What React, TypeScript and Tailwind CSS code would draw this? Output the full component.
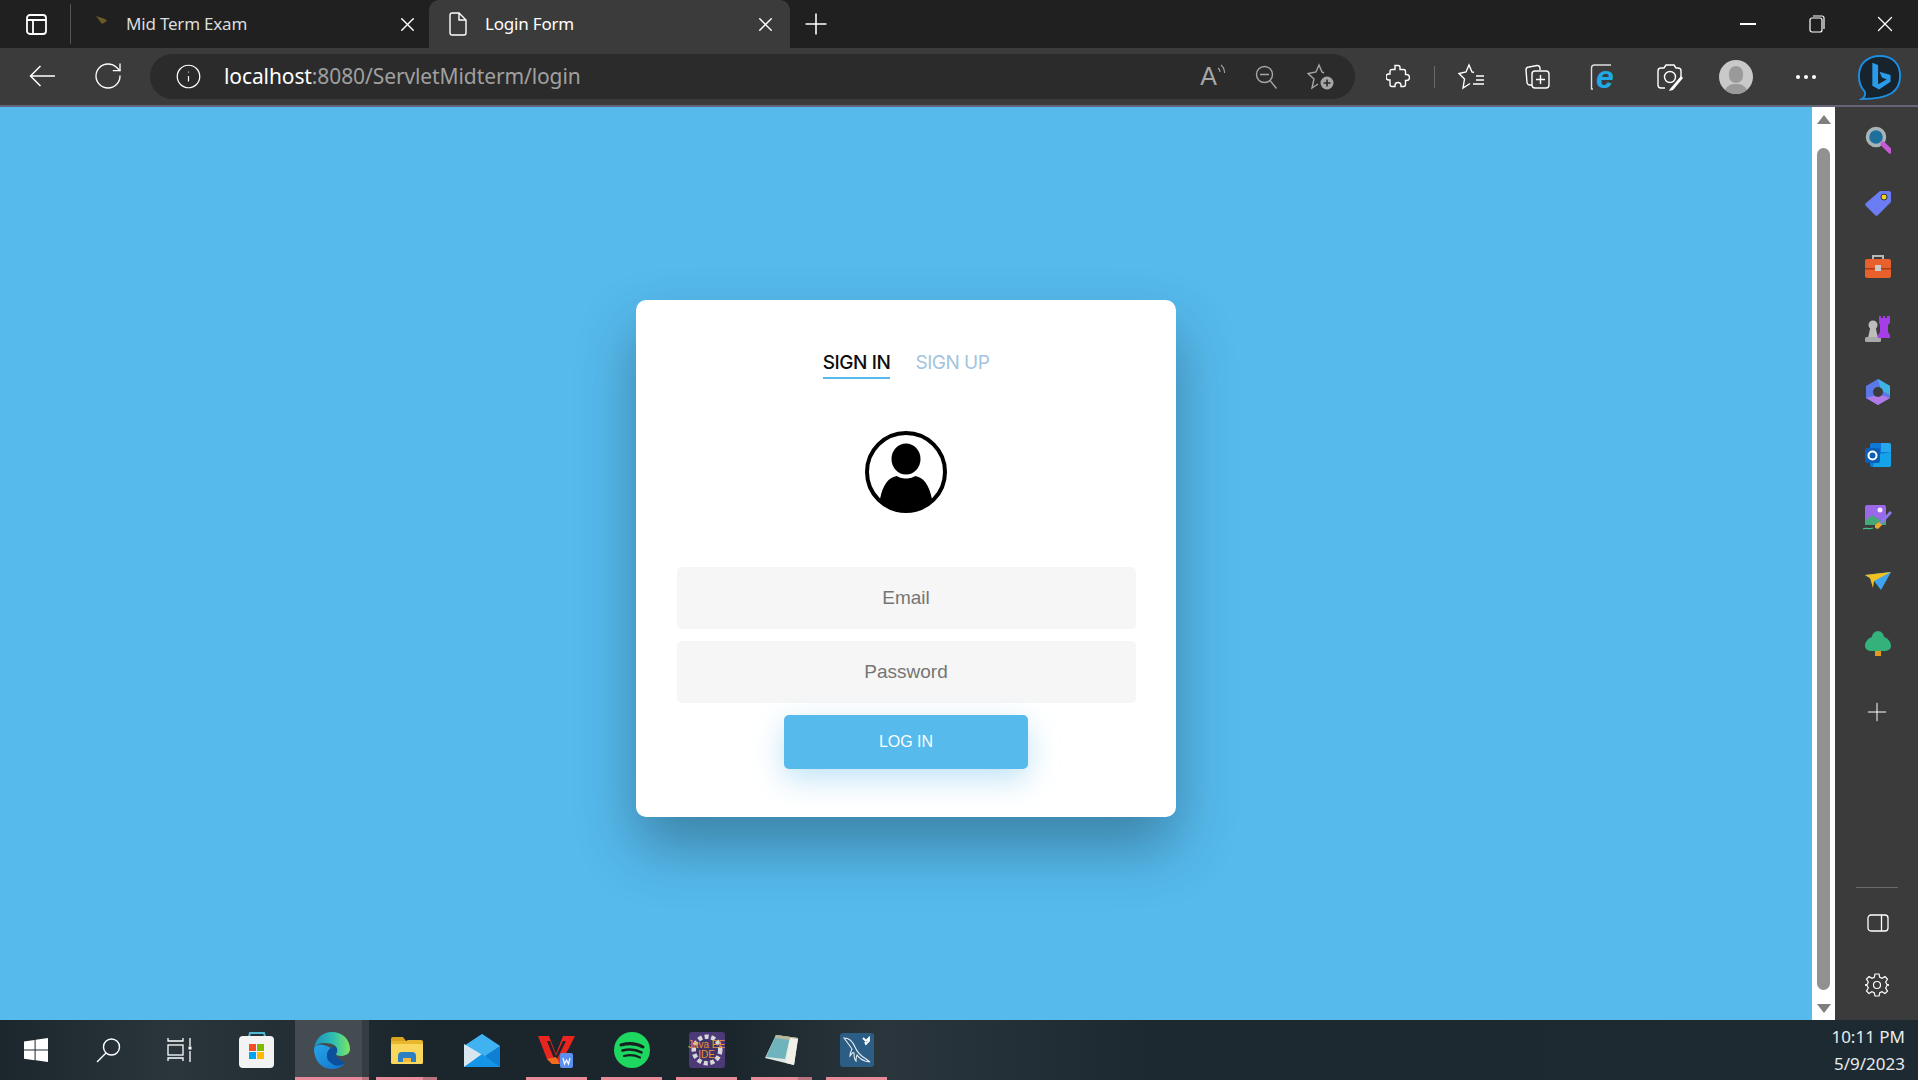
// App.tsx
import { Info, Plus, RotateCw, X } from "lucide-react";

const chromeFont = { fontFamily: '"Noto Sans", "Open Sans", sans-serif' };

function WindowsLogo() {
  return (
    <svg width="24" height="24" viewBox="0 0 24 24" fill="#fff">
      <path d="M0 3.4 10.6 2v9.600H0zM11.600 1.800 24 0v11.600H11.600zM0 12.600h10.600v9.600L0 20.700zM11.600 12.600H24V24l-12.400-1.700z" />
    </svg>
  );
}

function TaskbarSearch() {
  return (
    <svg width="25" height="25" viewBox="0 0 25 25" fill="none" stroke="#fff" strokeWidth="1.400">
      <circle cx="15.500" cy="9" r="8" />
      <path d="M10 15 1 24" />
    </svg>
  );
}

function TaskView() {
  return (
    <svg width="26" height="24" viewBox="0 0 26 24" fill="none" stroke="#fff" strokeWidth="1.300">
      <path d="M1 0v3h15V0M1 23v-3h15v3" />
      <rect x="1" y="7" width="15" height="10" />
      <path d="M23 0v8M23 13v11" />
      <rect x="21.500" y="8.500" width="3" height="3" fill="#fff" stroke="none" />
    </svg>
  );
}

function StoreIcon() {
  return (
    <svg width="36" height="36" viewBox="0 0 36 36">
      <path d="M9 8 11 1h14l2 7" fill="none" stroke="#4fb6d3" strokeWidth="2" />
      <rect x="0" y="4" width="35" height="32" rx="4" fill="#f3f3f3" />
      <rect x="10" y="12" width="7" height="7" fill="#f25022" />
      <rect x="18" y="12" width="7" height="7" fill="#7fba00" />
      <rect x="10" y="20" width="7" height="7" fill="#00a4ef" />
      <rect x="18" y="20" width="7" height="7" fill="#ffb900" />
    </svg>
  );
}

function EdgeIcon() {
  return (
    <svg width="37" height="37" viewBox="0 0 37 37">
      <defs>
        <linearGradient id="edgeTop" x1="0" y1="0.500" x2="1" y2="0.500">
          <stop offset="0" stopColor="#1b8fc4" />
          <stop offset="0.550" stopColor="#2fc0b0" />
          <stop offset="1" stopColor="#7de85f" />
        </linearGradient>
        <linearGradient id="edgeLow" x1="0" y1="0" x2="1" y2="1">
          <stop offset="0" stopColor="#26a5e8" />
          <stop offset="1" stopColor="#1273cc" />
        </linearGradient>
      </defs>
      <path d="M1 17C1 28 8 37 19 37c5 0 10-2 13-6-6 3-13 1-16-3-3-4-2-9 2-12C12 12 3 11 1 17Z" fill="url(#edgeLow)" />
      <path d="M14 24c0-6 5-10 9-9 2 1 2 5 0 7 0 4 6 7 9 9-5 4-11 3-14 0-3-2-4-4-4-7Z" fill="#0c4f9c" />
      <path d="M1 17C2 7 9 0 19 0c10 0 18 7 18 17 0 5-5 7-9 7-3 0-5-1-5-2 2-2 2-7-2-9C14 10 4 10 1 17Z" fill="url(#edgeTop)" />
    </svg>
  );
}

function ExplorerIcon() {
  return (
    <svg width="32" height="27" viewBox="0 0 32 27">
      <path d="M0 2a2 2 0 0 1 2-2h10l3 4h-15z" fill="#d9a520" />
      <rect x="0" y="4" width="32" height="23" rx="1.500" fill="#f9d65c" />
      <path d="M0 4h15l2-1h13a2 2 0 0 1 2 2v2H0z" fill="#e8b72e" />
      <path d="M7 25v-6a4 4 0 0 1 4-4h10a4 4 0 0 1 4 4v6h-5v-4h-8v4z" fill="#2b7fc3" />
      <rect x="12" y="21" width="8" height="4" fill="#f4b93a" />
    </svg>
  );
}

function MailIcon() {
  return (
    <svg width="36" height="33" viewBox="0 0 36 33">
      <path d="M0 12 18 0l18 12v21H0z" fill="#0f7fd4" />
      <path d="M0 12 18 0l18 12-18 12z" fill="#41b2f0" />
      <path d="M0 10 22 23 0 33z" fill="#d9e6ef" />
      <path d="M0 33 18 20l18 13z" fill="#1595e8" />
    </svg>
  );
}

function WpsIcon() {
  return (
    <svg width="37" height="35" viewBox="0 0 37 35">
      <path d="M0 3h11l7 18L25 3h12l-6 12-9 16h-8L9 26z" fill="#e8261f" />
      <path d="M9 8h3l6 15 7-15h3l-10 20h-1z" fill="#1a242b" />
      <path d="M9 26l5 5h8l-4-7z" fill="#f06b1e" />
      <rect x="22" y="20" width="13" height="15" rx="2" fill="#5b8ff0" />
      <path d="M25 25l1.500 6 2-4 2 4 1.500-6" fill="none" stroke="#fff" strokeWidth="1.200" />
    </svg>
  );
}

function SpotifyIcon() {
  return (
    <svg width="36" height="36" viewBox="0 0 36 36">
      <circle cx="18" cy="18" r="18" fill="#1ed760" />
      <g fill="none" stroke="#16201f" strokeLinecap="round">
        <path d="M7 13c7-2 15-2 22 2" strokeWidth="3" />
        <path d="M8.500 18.500c6-1.700 13-1.200 19 1.800" strokeWidth="2.600" />
        <path d="M10 24c5-1.300 11-1 16 1.500" strokeWidth="2.200" />
      </g>
    </svg>
  );
}

function EclipseIcon() {
  return (
    <div className="relative w-[36px] h-[36px] rounded-[3px] bg-[#4c3a78] flex items-center justify-center">
      <svg className="absolute" width="34" height="34" viewBox="0 0 34 34">
        <circle cx="17" cy="17" r="13" fill="none" stroke="#d8d8d8" strokeWidth="5" strokeDasharray="4 2.500" />
        <circle cx="17" cy="17" r="11" fill="#3f3468" />
      </svg>
      <span className="relative text-[10px] leading-[10px] text-center text-[#e8952f] whitespace-nowrap" style={{ fontFamily: '"Liberation Sans", sans-serif' }}>
        Java EE
        <br />
        IDE
      </span>
    </div>
  );
}

function NotepadIcon() {
  return (
    <svg width="34" height="32" viewBox="0 0 34 32">
      <path d="M11 1 33 4 29 31 0 24z" fill="#dfe8e4" />
      <path d="M11 1 25 3 20 25 1 23z" fill="#6fb3bd" />
      <path d="M11 1 33 4 32 7 10 4z" fill="#b9b79a" />
      <path d="M25 4 33 5 29 31 21 29z" fill="#f1f1e8" />
    </svg>
  );
}

function MysqlIcon() {
  return (
    <div className="w-[34px] h-[34px] rounded-[3px] bg-[#2b5d85] flex items-center justify-center">
      <svg width="30" height="30" viewBox="0 0 30 30" fill="none" stroke="#e8eef2" strokeWidth="1.100">
        <path d="M2 3c6 0 9 4 11 9 2 5 6 9 11 12l4 3-5-1c-3-1-6-3-8-6-1 2-1 4-1 6-2-2-2-5-2-8-1-1-2 0-4 3 0-3 1-5 2-7-2-3-5-7-8-11Z" />
        <path d="M21 3l3 3M24 6l3-3v3l-3 3-1-2" strokeWidth="1.800" stroke="#fff" />
      </svg>
    </div>
  );
}

function UserGlyph() {
  return (
    <svg width="82" height="82" viewBox="0 0 82 82">
      <defs>
        <clipPath id="avatarClip">
          <circle cx="41" cy="41" r="38.500" />
        </clipPath>
      </defs>
      <circle cx="41" cy="41" r="39" fill="#fff" stroke="#000" strokeWidth="4" />
      <ellipse cx="41" cy="28" rx="14.500" ry="15.500" fill="#000" />
      <path d="M41 47.500c4 0 8-1.500 9-2.500 8 1 14 8 17 23v14H15V68c3-15 9-22 17-23 1 1 5 2.500 9 2.500Z" fill="#000" clipPath="url(#avatarClip)" />
    </svg>
  );
}

function SidebarIcon({ children }: { children: React.ReactNode }) {
  return <div className="w-full h-[63px] flex items-center justify-center shrink-0">{children}</div>;
}

function ToolbarIcons() {
  const stroke = { fill: "none", stroke: "#fff", strokeWidth: 1.4 };
  return (
    <div className="flex items-center h-[45px] ml-[30px]">
      {/* extensions */}
      <div className="w-[26px] flex justify-center">
        <svg width="24" height="26" viewBox="0 0 24 26" {...stroke}>
          <path d="M9 1.500h3a2 2 0 0 1 2 2v2h3.500a2 2 0 0 1 2 2v3h1a3 3 0 0 1 0 6h-1v4a2 2 0 0 1-2 2h-2.500v-1a3 3 0 0 0-6 0v1H6a2 2 0 0 1-2-2v-4.500H3a3 3 0 0 1 0-6h1V7.500a2 2 0 0 1 2-2h3z" />
        </svg>
      </div>
      <div className="w-px h-[22px] bg-[#6b6b6b] ml-[23px]" />
      <div className="w-[28px] ml-[23px] flex justify-center">
        <svg width="28" height="28" viewBox="0 0 28 28" {...stroke}>
          <path d="M16 9.500 14 9 11 2 8 9 1 10.500 6.500 16 5 25l7-4.500" />
          <path d="M18 13h8M18 17h8M15 21h11" />
        </svg>
      </div>
      <div className="w-[28px] ml-[38px] flex justify-center">
        <svg width="26" height="26" viewBox="0 0 26 26" {...stroke}>
          <path d="M7 21 H5a3 3 0 0 1-3-2.500L1 6a3 3 0 0 1 3-3l8-1.500a3 3 0 0 1 3 2V6" />
          <rect x="7" y="7" width="17" height="17" rx="3" />
          <path d="M15.500 11v9M11 15.500h9" />
        </svg>
      </div>
      <div className="w-[28px] ml-[37px] flex justify-center">
        <svg width="26" height="28" viewBox="0 0 26 28" className="overflow-visible">
          <path d="M3 26H1.500V5a3 3 0 0 1 3-3H21" fill="none" stroke="#ddd" strokeWidth="1.400" />
          <text x="6" y="25" fontSize="32" fontWeight="700" fontStyle="italic" fill="#1fa9e6" fontFamily="Liberation Sans, sans-serif">e</text>
        </svg>
      </div>
      <div className="w-[28px] ml-[39px] flex justify-center">
        <svg width="26" height="28" viewBox="0 0 26 28" {...stroke}>
          <path d="M8 25H4a3 3 0 0 1-3-3V8a3 3 0 0 1 3-3h3l2-3h8l2 3h2a3 3 0 0 1 3 3v6" />
          <circle cx="13" cy="14" r="5.500" />
          <path d="M13 26l11-13 2 2-10 12-4 1z" fill="#fff" stroke="none" />
        </svg>
      </div>
      <div className="ml-[35px] w-[34px] h-[34px] rounded-full bg-[#c9c9c9] overflow-hidden relative">
        <div className="absolute left-[10px] top-[6px] w-[14px] h-[17px] rounded-full bg-[#9a9a9a]" />
        <div className="absolute left-[5px] top-[24px] w-[24px] h-[20px] rounded-full bg-[#9a9a9a]" />
      </div>
      <div className="ml-[43px] flex gap-[4px]">
        <span className="w-[4px] h-[4px] rounded-full bg-white" />
        <span className="w-[4px] h-[4px] rounded-full bg-white" />
        <span className="w-[4px] h-[4px] rounded-full bg-white" />
      </div>
      <div className="ml-[41px] flex items-center">
        <svg width="46" height="46" viewBox="0 0 46 48">
          <path d="M23 2c13 0 21 8 21 21 0 8-3 14-9 18-5 3-14 6-31 6 3-2 4-5 3-8C3 35 1 30 1 23 1 10 10 2 23 2Z" fill="#17232d" stroke="#1b8fe0" strokeWidth="2" />
          <path d="M15 9l6 2.500v20l9-5-5-2-2.500-6L34 22v7L22 37l-7-4z" fill="#2a9bea" />
        </svg>
      </div>
    </div>
  );
}

function TaskbarSlot({ children, under, split }: { children: React.ReactNode; under?: boolean; split?: boolean }) {
  return (
    <div className="relative w-[75px] h-full flex items-center justify-center">
      {children}
      {under && (
        <div className="absolute left-[7px] bottom-0 w-[61px] h-[3px] bg-[#e98a9b]">
          {split && <div className="absolute right-0 top-0 w-[14px] h-full bg-[#b8737f]" />}
        </div>
      )}
    </div>
  );
}

export default function App() {
  return (
    <div className="w-[1918px] h-[1080px] flex flex-col overflow-hidden bg-[#202020]" style={chromeFont}>
      {/* tab strip */}
      <div className="h-[48px] flex items-end bg-[#202020] text-white shrink-0">
        <div className="w-[71px] h-[40px] self-center flex items-center pl-[26px] border-r border-[#555]">
          <svg width="21" height="21" viewBox="0 0 21 21" fill="none" stroke="#fff" strokeWidth="1.800">
            <rect x="1" y="1" width="19" height="19" rx="3" />
            <path d="M1 6h19M7 6v14" />
          </svg>
        </div>
        <div className="w-[358px] h-full flex items-center pl-[25px] text-[#dcdcdc] text-[17px]">
          <svg width="12" height="8" viewBox="0 0 12 8" className="mb-[8px]">
            <path d="M0 0l9 3 2 2-5 3z" fill="#6a5a24" />
          </svg>
          <span className="ml-[18px] tracking-[-0.2px]">Mid Term Exam</span>
          <X size={23} strokeWidth={1.500} className="ml-auto mr-[10px] text-white" />
        </div>
        <div className="w-[361px] h-full flex items-center pl-[20px] bg-[#3b3b3b] rounded-t-[10px] text-[17px]">
          <svg width="18" height="24" viewBox="0 0 18 24" fill="none" stroke="#fff" strokeWidth="1.400">
            <path d="M3 1h7l7 7v13a2 2 0 0 1-2 2H3a2 2 0 0 1-2-2V3a2 2 0 0 1 2-2ZM10 1v7h7" />
          </svg>
          <span className="ml-[18px] tracking-[-0.2px]">Login Form</span>
          <X size={23} strokeWidth={1.500} className="ml-auto mr-[13px]" />
        </div>
        <Plus size={34} strokeWidth={1.100} className="ml-[9px] mb-[7px]" />
        <div className="ml-auto h-full flex items-center">
          <div className="w-[16px] h-[1.500px] bg-white mr-[53px]" />
          <svg width="16" height="18" viewBox="0 0 16 18" fill="none" stroke="#fff" strokeWidth="1.200" className="mr-[47px]">
            <rect x="1" y="3" width="12" height="14" rx="2" />
            <path d="M4 1h9a2 2 0 0 1 2 2v11" />
          </svg>
          <X size={26} strokeWidth={1.200} className="mr-[20px]" />
        </div>
      </div>

      {/* toolbar */}
      <div className="h-[59px] flex items-start pt-[6px] bg-[#3b3b3b] border-b-2 border-[#64647a] text-white shrink-0">
        <svg width="26" height="22" viewBox="0 0 26 22" fill="none" stroke="#fff" strokeWidth="1.500" className="ml-[29px] mt-[11px] shrink-0">
          <path d="M1.500 11H26M11.500 1l-10 10 10 10" />
        </svg>
        <RotateCw size={32} strokeWidth={1} className="ml-[37px] mt-[6px] shrink-0" />
        <div className="ml-[26px] w-[1205px] h-[45px] rounded-full bg-[#2b2b2b] flex items-center pl-[25px] shrink-0">
          <Info size={27} strokeWidth={1.100} />
          <span className="ml-[22px] text-[21px] leading-none tracking-[-0.1px] text-[#a0a0a0]">
            <span className="text-white">localhost</span>:8080/ServletMidterm/login
          </span>
          <div className="ml-auto flex items-center mr-[20px] text-[#a6a6a6]">
            <span className="relative text-[25px] leading-none mr-[38px]" style={{ fontFamily: '"Liberation Sans", sans-serif' }}>
              A
              <svg width="9" height="12" viewBox="0 0 9 12" fill="none" stroke="currentColor" strokeWidth="1.100" className="absolute -right-[9px] top-0">
                <path d="M1 4c1.500 1 2 2.500 2 4M4 1c2.500 2 3.500 4.500 3.500 8" />
              </svg>
            </span>
            <svg width="22" height="24" viewBox="0 0 22 24" fill="none" stroke="currentColor" strokeWidth="1.400" className="mr-[30px]">
              <circle cx="9.500" cy="9.500" r="8" />
              <path d="M5 9.500h9M15 15.500l6.500 8" />
            </svg>
            <svg width="28" height="28" viewBox="0 0 28 28" fill="none" stroke="currentColor" strokeWidth="1.400">
              <path d="M17 10 15 9 12 2 9 9 1 10.500 7 16 5 25l6-4" />
              <circle cx="20" cy="20" r="6.500" fill="#a6a6a6" stroke="none" />
              <path d="M20 16.500v7M16.500 20h7" stroke="#2b2b2b" strokeWidth="1.600" />
            </svg>
          </div>
        </div>
        <ToolbarIcons />
      </div>

      {/* page + side rail */}
      <div className="flex-1 flex min-h-0">
        <main className="flex-1 bg-[#56baed] flex items-center justify-center pb-[10px]">
          <div className="w-[540px] h-[517px] bg-white rounded-[10px] shadow-[0_30px_60px_0_rgba(0,0,0,0.3)] flex flex-col items-center">
            <div className="mt-[49px] flex gap-[25px] text-[19px] leading-[28px] font-medium" style={{ fontFamily: "Inter, sans-serif" }}>
              <span className="text-[#0d0d0d] border-b-2 border-[#56baed] tracking-[-0.4px]">SIGN IN</span>
              <span className="text-[#a3c4e0] font-normal tracking-[-0.5px]">SIGN UP</span>
            </div>
            <div className="mt-[52px] h-[82px]">
              <UserGlyph />
            </div>
            <div className="mt-[54px] w-[459px] h-[62px] rounded-[5px] bg-[#f6f6f6] flex items-center justify-center text-[19px] text-[#757575]" style={{ fontFamily: '"Liberation Sans", sans-serif' }}>
              Email
            </div>
            <div className="mt-[12px] w-[459px] h-[62px] rounded-[5px] bg-[#f6f6f6] flex items-center justify-center text-[19px] text-[#757575]" style={{ fontFamily: '"Liberation Sans", sans-serif' }}>
              Password
            </div>
            <button className="mt-[12px] w-[244px] h-[54px] rounded-[5px] bg-[#56baed] text-white text-[16px] shadow-[0_10px_30px_0_rgba(95,186,233,0.4)]" style={{ fontFamily: '"Liberation Sans", sans-serif' }}>
              LOG IN
            </button>
          </div>
        </main>

        {/* scrollbar */}
        <div className="w-[23px] bg-white flex flex-col items-center shrink-0">
          <div className="mt-[8px] w-0 h-0 border-x-[7px] border-x-transparent border-b-[9px] border-b-[#7e7e7e]" />
          <div className="mt-[24px] w-[13px] h-[842px] rounded-full bg-[#919191]" />
          <div className="mt-[14px] w-0 h-0 border-x-[7px] border-x-transparent border-t-[9px] border-t-[#7e7e7e]" />
        </div>

        {/* edge side rail */}
        <div className="w-[83px] bg-[#3b3b3b] flex flex-col items-center pt-[1px] shrink-0">
          <div className="w-full pl-[3px] flex flex-col">
            <SidebarIcon>
              <svg width="26" height="28" viewBox="0 0 26 28">
                <circle cx="11" cy="11" r="8.500" fill="#1d6f9c" stroke="#a8b3b8" strokeWidth="3.500" />
                <path d="M18 18l7 7" stroke="#c65ad6" strokeWidth="5" strokeLinecap="round" />
              </svg>
            </SidebarIcon>
            <SidebarIcon>
              <svg width="26" height="26" viewBox="0 0 26 26">
                <path d="M15 1h9a2 2 0 0 1 2 2v9L13 25a2 2 0 0 1-3 0L1 16a2 2 0 0 1 0-3Z" fill="#6c7cf2" />
                <circle cx="19" cy="7" r="3" fill="#f2d21f" stroke="#333" />
              </svg>
            </SidebarIcon>
            <SidebarIcon>
              <svg width="28" height="24" viewBox="0 0 28 24">
                <path d="M9 6V2h10v4" fill="none" stroke="#b8b8b8" strokeWidth="2" />
                <rect x="1" y="5" width="26" height="19" rx="2" fill="#e8602c" />
                <rect x="1" y="14" width="26" height="1.500" fill="#a83c18" />
                <rect x="11" y="11" width="6" height="6" fill="#c9c9c9" />
              </svg>
            </SidebarIcon>
            <SidebarIcon>
              <svg width="28" height="28" viewBox="0 0 28 28">
                <circle cx="9" cy="10" r="4.500" fill="#bdbdbd" />
                <path d="M6 14h6l2 9H4z" fill="#bdbdbd" />
                <rect x="1" y="22" width="16" height="5" rx="1.500" fill="#a9a9a9" />
                <path d="M15 1h2v2h2V1h2v2h2V1h3v7l-2 2v7l2 3v3H14v-3l2-3v-7l-1-2z" fill="#a63ee8" />
              </svg>
            </SidebarIcon>
            <SidebarIcon>
              <svg width="26" height="28" viewBox="0 0 26 28">
                <path d="M13 1l12 7v12l-12 7-12-7V8z" fill="#5a78e6" />
                <path d="M13 1l12 7v9l-9-5z" fill="#3fb4e4" />
                <path d="M1 20l12 7 12-7-9-3-7 1z" fill="#b07ae8" />
                <circle cx="13" cy="14" r="5" fill="#3b3b3b" />
              </svg>
            </SidebarIcon>
            <SidebarIcon>
              <svg width="26" height="26" viewBox="0 0 26 26">
                <rect x="5" y="1" width="21" height="24" rx="2" fill="#0f78d4" />
                <path d="M16 1h8a2 2 0 0 1 2 2v7h-10z" fill="#28a8ea" />
                <path d="M10 13l16-3v13a2 2 0 0 1-2 2H8z" fill="#14a3e8" />
                <rect x="0" y="6" width="15" height="15" rx="2" fill="#0a5fb4" />
                <circle cx="7.500" cy="13.500" r="4" fill="none" stroke="#fff" strokeWidth="2" />
              </svg>
            </SidebarIcon>
            <SidebarIcon>
              <svg width="30" height="28" viewBox="0 0 30 28">
                <rect x="2" y="1" width="21" height="20" rx="2" fill="#9a68e8" />
                <path d="M2 17l7-6 6 4 8 3v3H2z" fill="#44a877" />
                <circle cx="17" cy="6" r="2.500" fill="#f1e8ff" />
                <path d="M15 20 27 7l2 2-12 13z" fill="#8a7af0" />
                <path d="M12 21l4-3 3 3-4 4-3-1z" fill="#e8a92c" />
                <path d="M0 25c3-2 5 1 10-1" stroke="#3ec48a" fill="none" strokeWidth="1.300" />
              </svg>
            </SidebarIcon>
            <SidebarIcon>
              <svg width="26" height="18" viewBox="0 0 26 18">
                <path d="M0 3 26 0 16 18 9 9z" fill="#3ea4f0" />
                <path d="M0 3 26 0 9 9 8 16 5 6z" fill="#f2c01f" />
              </svg>
            </SidebarIcon>
            <SidebarIcon>
              <svg width="26" height="26" viewBox="0 0 26 26">
                <path d="M13 0c3 0 6 3 6 6 4 1 7 5 7 9 0 3-3 5-7 5H7c-4 0-7-2-7-5 0-4 3-8 7-9 0-3 3-6 6-6Z" fill="#34b27b" />
                <rect x="10" y="20" width="6" height="5" fill="#e39a1d" />
              </svg>
            </SidebarIcon>
          </div>
          <div className="mt-[22px] h-[30px] flex items-center text-white">
            <Plus size={30} strokeWidth={0.800} />
          </div>
          <div className="mt-auto w-[42px] h-px bg-[#6a6a6a]" />
          <div className="mt-[26px] pl-[2px]">
            <svg width="22" height="18" viewBox="0 0 22 18" fill="none" stroke="#fff" strokeWidth="1.300">
              <rect x="1" y="1" width="20" height="16" rx="3" />
              <path d="M14.500 1v16" />
            </svg>
          </div>
          <div className="mt-[41px] mb-[23px] pl-[1px]">
            <svg width="24" height="24" viewBox="0 0 24 24" fill="none" stroke="#fff" strokeWidth="1.200">
              <circle cx="12" cy="12" r="3.500" />
              <path d="M10 1h4l.8 3.300 2.300 1L20 3.500 22.500 6l-1.800 3 1 2.200L24 12l-2.300.8-1 2.300 1.800 3-2.500 2.400-3-1.800-2.200 1L14 23h-4l-.8-3.300-2.300-1-3 1.800L1.500 18l1.800-3-1-2.300L0 12l2.300-.8 1-2.200-1.800-3L4 3.500l3 1.800 2.300-1z" />
            </svg>
          </div>
        </div>
      </div>

      {/* windows taskbar */}
      <div className="h-[60px] flex items-stretch text-white shrink-0 bg-[linear-gradient(90deg,#1b262d_0%,#2a353c_9%,#1a252c_22%,#1a252c_38%,#2a353c_46%,#1d2931_60%,#1e2a32_100%)]">
        <div className="w-[72px] flex items-center justify-center"><WindowsLogo /></div>
        <div className="w-[72px] flex items-center justify-center"><TaskbarSearch /></div>
        <div className="w-[72px] flex items-center justify-center"><TaskView /></div>
        <div className="w-[79px] pl-[2px] flex items-center justify-center"><StoreIcon /></div>
        <div className="relative w-[74px] flex items-center justify-center bg-[#444c52]">
          <div className="absolute right-0 top-0 w-[7px] h-full bg-[#353d43]" />
          <div className="mr-[2px]"><EdgeIcon /></div>
          <div className="absolute left-0 bottom-0 w-[74px] h-[3px] bg-[#e98a9b]">
            <div className="absolute right-0 top-0 w-[7px] h-full bg-[#b8737f]" />
          </div>
        </div>
        <TaskbarSlot under split><ExplorerIcon /></TaskbarSlot>
        <TaskbarSlot><MailIcon /></TaskbarSlot>
        <TaskbarSlot under><WpsIcon /></TaskbarSlot>
        <TaskbarSlot under><SpotifyIcon /></TaskbarSlot>
        <TaskbarSlot under><EclipseIcon /></TaskbarSlot>
        <TaskbarSlot under split><NotepadIcon /></TaskbarSlot>
        <TaskbarSlot under><MysqlIcon /></TaskbarSlot>
        <div className="ml-auto mr-[13px] flex flex-col items-end justify-center text-[17px] leading-[27px] text-[#e6ecef]">
          <span>10:11 PM</span>
          <span>5/9/2023</span>
        </div>
      </div>
    </div>
  );
}
